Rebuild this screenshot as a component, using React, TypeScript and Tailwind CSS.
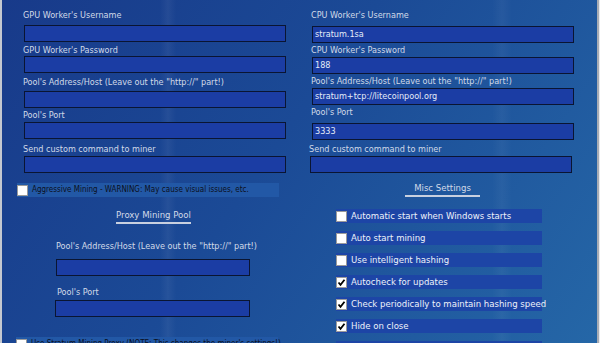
import React from "react";

const font = "font-['DejaVu_Sans_Condensed','DejaVu_Sans',sans-serif]";

const Check: React.FC<{ checked?: boolean }> = ({ checked }) => (
  <div className="w-[11px] h-[11px] shrink-0 bg-white border border-[#9a9a9a] flex items-center justify-center">
    {checked && (
      <svg width="9" height="9" viewBox="0 0 9 9">
        <path d="M1.5 4.5 L3.5 6.8 L7.5 1.8" stroke="#000" strokeWidth="1.8" fill="none" />
      </svg>
    )}
  </div>
);

const Input: React.FC<{ value?: string; className?: string }> = ({ value, className }) => (
  <div
    className={`shrink-0 h-[17px] bg-[#1b3da4] border border-[#0a1532] text-[9px] leading-[15px] pl-[2px] text-[#e4ecf8] whitespace-nowrap ${className}`}
  >
    {value}
  </div>
);

const Field: React.FC<{
  label: string;
  value?: string;
  labelCls: string;
  inputCls: string;
}> = ({ label, value, labelCls, inputCls }) => (
  <>
    <div className={`shrink-0 text-[9px] leading-[12px] text-[#d2dae8] whitespace-nowrap ${labelCls}`}>{label}</div>
    <Input value={value} className={inputCls} />
  </>
);

const MiscRow: React.FC<{ label: string; checked?: boolean }> = ({ label, checked }) => (
  <div className="shrink-0 w-[206px] h-[14px] bg-[#1d45a6] flex items-center">
    <Check checked={checked} />
    <span className="ml-[4px] text-[9.5px] leading-[12px] text-[#eef2fa] whitespace-nowrap">{label}</span>
  </div>
);

export default function App() {
  return (
    <div
      className={`${font} w-[600px] h-[343px] overflow-hidden flex border-l-2 border-[#c4c8d0] bg-[linear-gradient(90deg,transparent_158px,rgba(255,255,255,0.05)_166px,transparent_174px,transparent_490px,rgba(255,255,255,0.04)_500px,transparent_510px),linear-gradient(125deg,#183a8a,#1b4a96_45%,#2567a7)]`}
    >
      {/* left column */}
      <div className="w-[298px] shrink-0 flex flex-col pl-[21px]">
        <Field label="GPU Worker's Username" labelCls="mt-[9px]" inputCls="mt-[4px] ml-[1px] w-[262px]" />
        <Field label="GPU Worker's Password" labelCls="mt-[2px]" inputCls="mt-0 ml-[1px] w-[262px]" />
        <Field
          label={'Pool\'s Address/Host (Leave out the "http://" part!)'}
          labelCls="mt-[3px]"
          inputCls="mt-[3px] ml-[1px] w-[262px]"
        />
        <Field label="Pool's Port" labelCls="mt-[1px]" inputCls="mt-[1px] ml-[1px] w-[262px]" />
        <Field label="Send custom command to miner" labelCls="mt-[4px]" inputCls="mt-[1px] ml-[1px] w-[262px]" />

        <div className="shrink-0 mt-[10px] ml-[-6px] w-[262px] h-[14px] bg-[#2258a6] flex items-center">
          <Check />
          <span className="ml-[4px] text-[8px] leading-[12px] text-[#0c1020] whitespace-nowrap">
            Aggressive Mining - WARNING: May cause visual issues, etc.
          </span>
        </div>

        <div className="shrink-0 mt-[12px] ml-[93px] w-[75px] flex justify-center whitespace-nowrap text-[9.5px] leading-[12px] text-[#d2dae8] border-b-2 border-[#c8d0e0] pb-[1px]">
          Proxy Mining Pool
        </div>

        <div className="shrink-0 ml-[33px] mt-[16px] text-[9px] leading-[12px] text-[#d2dae8] whitespace-nowrap">
          Pool's Address/Host (Leave out the "http://" part!)
        </div>
        <Input className="mt-[7px] ml-[33px] w-[194px]" />
        <div className="shrink-0 ml-[34px] mt-[10px] text-[9px] leading-[12px] text-[#d2dae8]">Pool's Port</div>
        <Input className="mt-[2px] ml-[32px] w-[195px]" />

        <div className="shrink-0 mt-[20px] ml-[-7px] w-[262px] h-[14px] bg-[#2258a6] flex items-center">
          <Check />
          <span className="ml-[4px] text-[8px] leading-[12px] text-[#0c1020] whitespace-nowrap">
            Use Stratum Mining Proxy (NOTE: This changes the miner's settings!)
          </span>
        </div>
      </div>

      {/* right column */}
      <div className="flex-1 flex flex-col pl-[11px]">
        <Field
          label="CPU Worker's Username"
          value="stratum.1sa"
          labelCls="mt-[9px]"
          inputCls="mt-[5px] ml-[1px] w-[262px]"
        />
        <Field label="CPU Worker's Password" value="188" labelCls="mt-[1px]" inputCls="mt-[1px] ml-[1px] w-[262px]" />
        <Field
          label={'Pool\'s Address/Host (Leave out the "http://" part!)'}
          value="stratum+tcp://litecoinpool.org"
          labelCls="mt-[1px]"
          inputCls="mt-[1px] ml-[1px] w-[262px]"
        />
        <Field label="Pool's Port" value="3333" labelCls="mt-[1px]" inputCls="mt-[5px] ml-[1px] w-[262px]" />
        <Field
          label="Send custom command to miner"
          labelCls="mt-[3px] ml-[-2px]"
          inputCls="mt-[1px] ml-[-1px] w-[262px]"
        />

        <div className="shrink-0 mt-[9px] ml-[94px] w-[75px] flex justify-center whitespace-nowrap text-[9.5px] leading-[12px] text-[#d2dae8] border-b-2 border-[#c8d0e0] pb-[1px]">
          Misc Settings
        </div>

        <div className="shrink-0 mt-[12px] ml-[25px] flex flex-col gap-[8px]">
          <MiscRow label="Automatic start when Windows starts" />
          <MiscRow label="Auto start mining" />
          <MiscRow label="Use intelligent hashing" />
          <MiscRow label="Autocheck for updates" checked />
          <MiscRow label="Check periodically to maintain hashing speed" checked />
          <MiscRow label="Hide on close" checked />
          <MiscRow label="Minimize to tray" />
        </div>
      </div>

      <div className="w-[2px] shrink-0 bg-[#a8acb4]" />
      <div className="w-[1px] shrink-0 bg-[#e8eaee]" />
    </div>
  );
}
